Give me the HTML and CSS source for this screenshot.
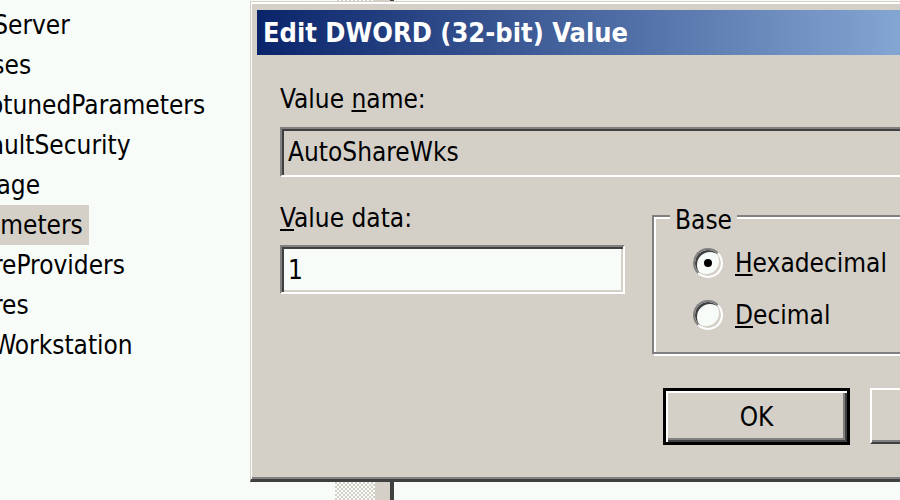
FILE: index.html
```html
<!DOCTYPE html>
<html lang="en">
<head>
<meta charset="utf-8">
<title>Edit DWORD (32-bit) Value</title>
<link rel="stylesheet" href="styles.css">
</head>
<body>
<div class="regedit">
  <div class="tree-pane">
    <ul class="tree">
      <li class="node">LanmanServer</li>
      <li class="node child">Aliases</li>
      <li class="node child">AutotunedParameters</li>
      <li class="node child">DefaultSecurity</li>
      <li class="node child">Linkage</li>
      <li class="node child"><span class="sel">Parameters</span></li>
      <li class="node child">ShareProviders</li>
      <li class="node child">Shares</li>
      <li class="node">LanmanWorkstation</li>
    </ul>
  </div>
  <div class="vscroll"></div>
  <div class="vscroll-edge"></div>
  <div class="split"></div>
  <div class="list-pane"></div>
</div>

<div class="dialog">
  <div class="titlebar">Edit DWORD (32-bit) Value</div>
  <div class="dlg-body">
    <div class="lbl name-lbl">Value <u>n</u>ame:</div>
    <div class="edit name-edit">AutoShareWks</div>
    <div class="row">
      <div class="col-data">
        <div class="lbl"><u>V</u>alue data:</div>
        <div class="edit data-edit">1</div>
      </div>
      <fieldset class="group">
        <legend>Base</legend>
        <div class="group-inner">
          <div class="radio-row"><span class="radio checked"></span><span><u>H</u>exadecimal</span></div>
          <div class="radio-row"><span class="radio"></span><span><u>D</u>ecimal</span></div>
        </div>
      </fieldset>
    </div>
    <div class="buttons">
      <button class="btn default">OK</button>
      <button class="btn">Cancel</button>
    </div>
  </div>
</div>
</body>
</html>
```
FILE: styles.css
```css
html {
  overflow: hidden;
}

body {
  margin: 0;
  width: 900px;
  height: 500px;
  overflow: hidden;
  position: relative;
  background: #f8fcf8;
  font-family: "DejaVu Sans Condensed", "DejaVu Sans", sans-serif;
  font-stretch: semi-condensed;
  font-size: 26px;
  color: #000;
}

/* registry editor behind the dialog */
.regedit {
  display: flex;
  height: 500px;
}

.tree-pane {
  width: 335px;
  flex: none;
  overflow: hidden;
  background: #f8fcf8;
}

.tree {
  list-style: none;
  margin: 5px 0 0 -101px;
  padding: 0;
}

.node {
  height: 40px;
  line-height: 40px;
  white-space: nowrap;
}

.child {
  padding-left: 50px;
}

.sel {
  display: inline-block;
  background: #d4d0c8;
  padding: 0 6px 0 3px;
  margin-left: -3px;
}

.vscroll {
  width: 40px;
  flex: none;
  background: repeating-conic-gradient(#d4d0c8 0 25%, #f8fcf8 0 50%) 0 0 / 4px 4px;
}

.vscroll-edge {
  width: 15px;
  flex: none;
  background: #d4d0c8;
}

.split {
  width: 4px;
  flex: none;
  background: #404040;
}

.list-pane {
  flex: 1;
  background: #f8fcf8;
}

/* dialog window */
.dialog {
  position: absolute;
  left: 250px;
  top: 1px;
  width: 839px;
  height: 481px;
  box-sizing: border-box;
  background: #d4d0c8;
  border: 1px solid #d4d0c8;
  border-right: 3px solid #404040;
  border-bottom: 3px solid #404040;
  box-shadow: inset 1px 2px 0 #fff, inset -2px -2px 0 #808080;
  padding: 8px 6px 0 6px;
}

.titlebar {
  height: 45px;
  line-height: 45px;
  background: linear-gradient(90deg, #0a246a 0%, #a6caf0 100%);
  color: #fff;
  font-weight: bold;
  font-size: 27px;
  padding-left: 6px;
  white-space: nowrap;
  overflow: hidden;
}

.dlg-body {
  padding: 0 23px;
}

.lbl {
  height: 32px;
  line-height: 32px;
  white-space: nowrap;
}

.name-lbl {
  margin-top: 28px;
}

.edit {
  box-sizing: border-box;
  display: flex;
  align-items: center;
  border: 2px solid;
  border-color: #808080 #fff #fff #808080;
  box-shadow: inset 2px 2px 0 #404040, inset -2px -2px 0 #d4d0c8;
  padding-left: 6px;
  white-space: nowrap;
}

.name-edit {
  height: 50px;
  margin-top: 12px;
  background: #d4d0c8;
}

.data-edit {
  height: 49px;
  margin-top: 11px;
  background: #f8fcf8;
}

.row {
  display: grid;
  grid-template-columns: 345px 405px;
  column-gap: 27px;
  align-items: start;
  margin-top: 21px;
}

.col-data {
  padding-top: 4px;
}

.group {
  margin: 0;
  padding: 0;
  min-width: 0;
  border: 2px solid #808080;
  box-shadow: inset 2px 2px 0 #fff, 2px 2px 0 #fff;
}

.group legend {
  margin-left: 16px;
  padding: 8px 5px 0;
  line-height: 28px;
  background: #d4d0c8;
}

.group-inner {
  padding: 9px 0 17px 39px;
}

.radio-row {
  display: flex;
  align-items: center;
  gap: 12px;
  height: 40px;
  white-space: nowrap;
}

.radio-row + .radio-row {
  margin-top: 12px;
}

.radio {
  position: relative;
  flex: none;
  width: 30px;
  height: 30px;
  box-sizing: border-box;
  border-radius: 50%;
  border: 2px solid;
  border-color: #808080 #fff #fff #808080;
  background: #f8fcf8;
  box-shadow: inset 2px 2px 0 #404040, inset -2px -2px 0 #d4d0c8;
}

.radio.checked::after {
  content: "";
  position: absolute;
  left: 50%;
  top: 50%;
  width: 8px;
  height: 8px;
  margin: -4px 0 0 -4px;
  border-radius: 50%;
  background: #000;
}

.buttons {
  display: flex;
  justify-content: flex-end;
  align-items: flex-start;
  gap: 20px;
  margin-top: 34px;
}

.btn {
  width: 187px;
  height: 56px;
  box-sizing: border-box;
  padding: 0;
  font: inherit;
  color: #000;
  background: #d4d0c8;
  border: 2px solid;
  border-color: #fff #404040 #404040 #fff;
  box-shadow: inset -2px -2px 0 #808080;
}

.btn.default {
  height: 57px;
  border: 3px solid #000;
  box-shadow: inset 2px 2px 0 #fff, inset -2px -2px 0 #404040, inset -4px -4px 0 #808080;
}
```
